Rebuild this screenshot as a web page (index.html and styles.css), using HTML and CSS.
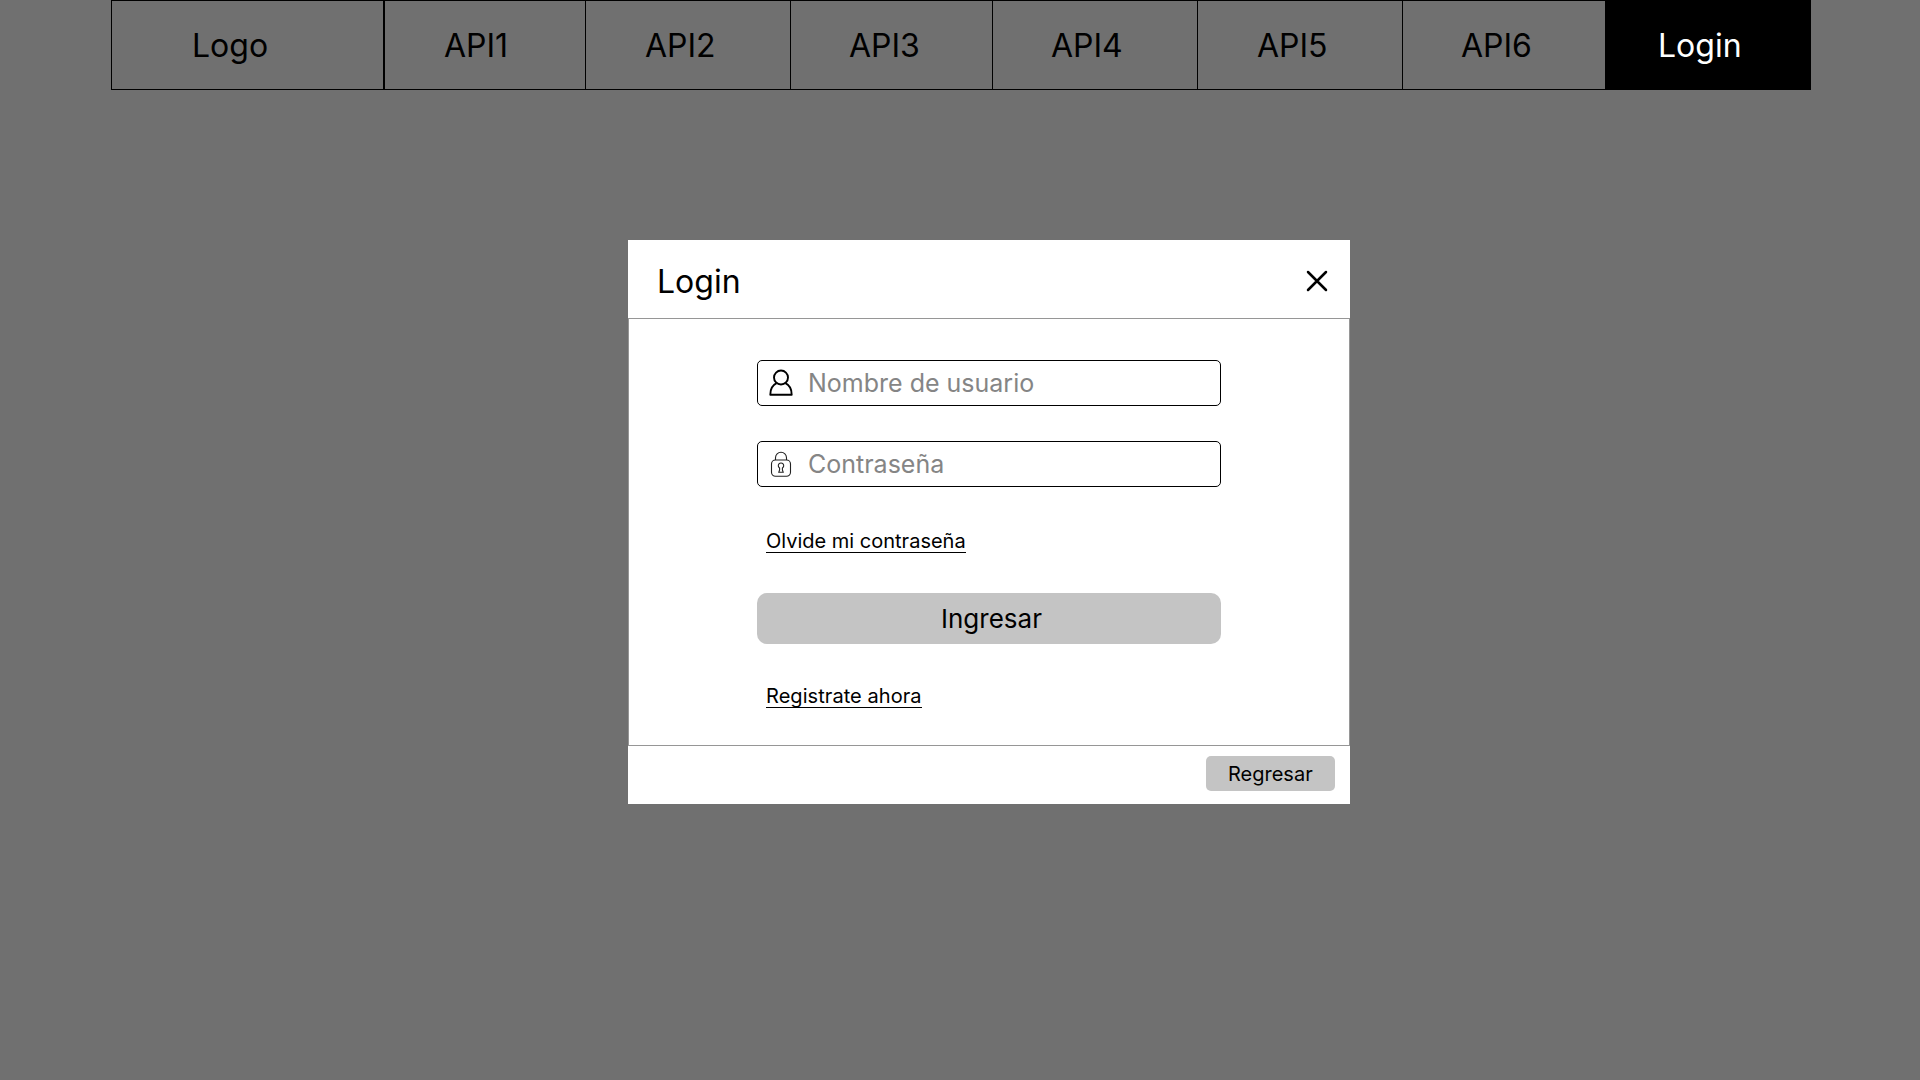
FILE: index.html
```html
<!DOCTYPE html>
<html lang="es">
<head>
<meta charset="utf-8">
<title>Login</title>
<link rel="stylesheet" href="styles.css">
</head>
<body>
<nav class="nav">
  <a class="nav-item logo">Logo</a>
  <a class="nav-item api1">API1</a>
  <a class="nav-item wide">API2</a>
  <a class="nav-item">API3</a>
  <a class="nav-item wide api4">API4</a>
  <a class="nav-item wide">API5</a>
  <a class="nav-item api6">API6</a>
  <a class="nav-item active">Login</a>
</nav>
<main class="modal">
  <header class="modal-header">
    <h1 class="title">Login</h1>
    <svg class="close" width="22" height="22" viewBox="0 0 22 22"><path d="M2 2L20 20M20 2L2 20" fill="none" stroke="#000" stroke-width="2.5" stroke-linecap="round"/></svg>
  </header>
  <form class="modal-body">
    <label class="field">
      <svg class="icon" width="24" height="28" viewBox="0 0 24 28" fill="none" stroke="#000" stroke-width="1.9" stroke-linejoin="round"><circle cx="12" cy="8.5" r="7"/><path d="M7.6 14.2C3.5 16.2 1.3 20 1.3 25.7H22.7C22.7 20 20.5 16.2 16.4 14.2"/></svg>
      <span class="placeholder">Nombre de usuario</span>
    </label>
    <label class="field">
      <svg class="icon" width="24" height="28" viewBox="0 0 24 28" fill="none" stroke="#222" stroke-width="1.1"><rect x="2.5" y="10" width="19" height="16.2" rx="4"/><path d="M6.5 10V7.7a5.5 5.5 0 0 1 11 0V10"/><path d="M10.6 18a2.7 2.7 0 1 1 2.8 0v2l.8 2.3H9.8l.8-2.3Z"/></svg>
      <span class="placeholder">Contraseña</span>
    </label>
    <a class="link">Olvide mi contraseña</a>
    <div class="submit">Ingresar</div>
    <a class="link register">Registrate ahora</a>
  </form>
  <footer class="modal-footer"><div class="back">Regresar</div></footer>
</main>
</body>
</html>
```
FILE: styles.css
```css
* { box-sizing: border-box; }
body {
  margin: 0;
  height: 1080px;
  overflow: hidden;
  background: #707070;
  color: #000;
  font-family: Inter, sans-serif;
}
.nav {
  display: flex;
  width: 1700px;
  height: 90px;
  margin-left: 111px;
  border: solid #000;
  border-width: 1px 0;
}
.nav-item {
  width: 202px;
  padding-left: 58px;
  border-left: 1px solid #000;
  font-size: 32px;
  line-height: 89px;
}
.logo { width: 272px; padding-left: 80px; }
.api1 { padding-left: 59px; border-left-width: 2px; }
.wide { width: 205px; padding-left: 59px; }
.api4 { padding-left: 58px; }
.api6 { width: 203px; }
.active { width: 206px; padding-left: 52px; background: #000; color: #fff; }
.modal {
  width: 722px;
  height: 564px;
  margin: 150px 0 0 628px;
  background: #fff;
}
.modal-header {
  display: flex;
  justify-content: space-between;
  height: 78px;
  padding: 0 22px 0 29px;
}
.title {
  margin: 0;
  font-size: 32px;
  font-weight: 400;
  line-height: 83px;
}
.close { margin-top: 30px; }
.modal-body {
  display: flex;
  flex-direction: column;
  align-items: flex-start;
  height: 428px;
  padding: 41px 128px 0;
  border: 1px solid #969696;
}
.field {
  display: flex;
  align-items: center;
  width: 464px;
  height: 46px;
  margin-bottom: 35px;
  padding-left: 11px;
  border: 1px solid #000;
  border-radius: 5px;
}
.placeholder {
  margin-left: 15px;
  color: #858585;
  font-size: 25px;
  line-height: 44px;
}
.link {
  height: 24px;
  margin: 7px 0 0 9px;
  border-bottom: 1px solid #000;
  font-size: 20px;
  line-height: 24px;
}
.register { letter-spacing: 0.06px; }
.submit {
  width: 464px;
  height: 51px;
  margin: 40px 0 33px;
  padding-left: 184px;
  border-radius: 10px;
  background: #c4c4c4;
  font-size: 26px;
  line-height: 51px;
}
.modal-footer {
  display: flex;
  justify-content: flex-end;
  padding: 10px 15px 0 0;
}
.back {
  width: 129px;
  height: 35px;
  padding-left: 22px;
  border-radius: 5px;
  background: #c4c4c4;
  font-size: 20px;
  line-height: 36px;
}
```
